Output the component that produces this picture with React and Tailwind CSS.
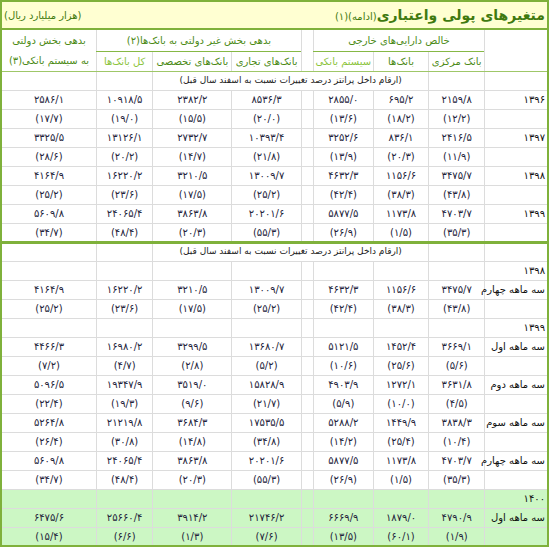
import React from 'react'

const widths = ['w-[63px]', 'w-[56px]', 'w-[55px]', 'w-[60px]', 'w-[12px]', 'w-[69px]', 'w-[79px]', 'w-[56px]', 'w-[95px]']

const NOTE = '(ارقام داخل پرانتز درصد تغییرات نسبت به اسفند سال قبل)'

const first = [
    { label: '۱۳۹۶', v: ['۲۱۵۹/۸', '۶۹۵/۲', '۲۸۵۵/۰', '۸۵۳۶/۳', '۲۳۸۲/۲', '۱۰۹۱۸/۵', '۲۵۸۶/۱'] },
    { label: '', v: ['(۱۲/۲)', '(۱۸/۲)', '(۱۳/۶)', '(۲۰/۰)', '(۱۵/۵)', '(۱۹/۰)', '(۱۷/۷)'] },
    { label: '۱۳۹۷', v: ['۲۴۱۶/۵', '۸۳۶/۱', '۳۲۵۲/۶', '۱۰۳۹۳/۴', '۲۷۳۲/۷', '۱۳۱۲۶/۱', '۳۳۲۵/۵'] },
    { label: '', v: ['(۱۱/۹)', '(۲۰/۳)', '(۱۳/۹)', '(۲۱/۸)', '(۱۴/۷)', '(۲۰/۲)', '(۲۸/۶)'] },
    { label: '۱۳۹۸', v: ['۳۴۷۵/۷', '۱۱۵۶/۶', '۴۶۳۲/۳', '۱۳۰۰۹/۷', '۳۲۱۰/۵', '۱۶۲۲۰/۲', '۴۱۶۴/۹'] },
    { label: '', v: ['(۴۳/۸)', '(۳۸/۳)', '(۴۲/۴)', '(۲۵/۲)', '(۱۷/۵)', '(۲۳/۶)', '(۲۵/۲)'] },
    { label: '۱۳۹۹', v: ['۴۷۰۳/۷', '۱۱۷۳/۸', '۵۸۷۷/۵', '۲۰۲۰۱/۶', '۳۸۶۳/۸', '۲۴۰۶۵/۴', '۵۶۰۹/۸'] },
    { label: '', v: ['(۳۵/۳)', '(۱/۵)', '(۲۶/۹)', '(۵۵/۳)', '(۲۰/۳)', '(۴۸/۴)', '(۳۴/۷)'] },
]

const second = [
    { label: '۱۳۹۸' },
    { label: 'سه ماهه چهارم', v: ['۳۴۷۵/۷', '۱۱۵۶/۶', '۴۶۳۲/۳', '۱۳۰۰۹/۷', '۳۲۱۰/۵', '۱۶۲۲۰/۲', '۴۱۶۴/۹'] },
    { label: '', v: ['(۴۳/۸)', '(۳۸/۳)', '(۴۲/۴)', '(۲۵/۲)', '(۱۷/۵)', '(۲۳/۶)', '(۲۵/۲)'] },
    { label: '۱۳۹۹' },
    { label: 'سه ماهه اول', v: ['۳۶۶۹/۱', '۱۴۵۲/۴', '۵۱۲۱/۵', '۱۳۶۸۰/۷', '۳۲۹۹/۵', '۱۶۹۸۰/۲', '۴۴۶۶/۳'] },
    { label: '', v: ['(۵/۶)', '(۲۵/۶)', '(۱۰/۶)', '(۵/۲)', '(۲/۸)', '(۴/۷)', '(۷/۲)'] },
    { label: 'سه ماهه دوم', v: ['۳۶۳۱/۸', '۱۲۷۲/۱', '۴۹۰۳/۹', '۱۵۸۲۸/۹', '۳۵۱۹/۰', '۱۹۳۴۷/۹', '۵۰۹۶/۵'] },
    { label: '', v: ['(۴/۵)', '(۱۰/۰)', '(۵/۹)', '(۲۱/۷)', '(۹/۶)', '(۱۹/۳)', '(۲۲/۴)'] },
    { label: 'سه ماهه سوم', v: ['۳۸۳۸/۳', '۱۴۴۹/۹', '۵۲۸۸/۲', '۱۷۵۳۵/۵', '۳۶۸۴/۳', '۲۱۲۱۹/۸', '۵۲۶۴/۸'] },
    { label: '', v: ['(۱۰/۴)', '(۲۵/۴)', '(۱۴/۲)', '(۳۴/۸)', '(۱۴/۸)', '(۳۰/۸)', '(۲۶/۴)'] },
    { label: 'سه ماهه چهارم', v: ['۴۷۰۳/۷', '۱۱۷۳/۸', '۵۸۷۷/۵', '۲۰۲۰۱/۶', '۳۸۶۳/۸', '۲۴۰۶۵/۴', '۵۶۰۹/۸'] },
    { label: '', v: ['(۳۵/۳)', '(۱/۵)', '(۲۶/۹)', '(۵۵/۳)', '(۲۰/۳)', '(۴۸/۴)', '(۳۴/۷)'] },
    { label: '۱۴۰۰', hl: true },
    { label: 'سه ماهه اول', hl: true, v: ['۴۷۹۰/۹', '۱۸۷۹/۰', '۶۶۶۹/۹', '۲۱۷۴۶/۲', '۳۹۱۴/۲', '۲۵۶۶۰/۴', '۶۴۷۵/۶'] },
    { label: '', hl: true, v: ['(۱/۹)', '(۶۰/۱)', '(۱۳/۵)', '(۷/۶)', '(۱/۳)', '(۶/۶)', '(۱۵/۴)'] },
]

const cell = 'border border-[#dcdcdc] p-0 text-center align-middle'

function NoteRow({ top }) {
    const b = top ? 'border-t-[3px] border-t-[#7fb13b]' : ''
    return (
        <tr className="h-[19px] text-[9px] text-[#222]">
            <td className={`${cell} ${b}`}></td>
            <td className={`${cell} ${b}`}></td>
            <td colSpan={5} className={`${cell} ${b}`}>{NOTE}</td>
            <td className={`${cell} ${b}`}></td>
            <td className={`${cell} ${b}`}></td>
        </tr>
    )
}

function DataRow({ row }) {
    const cells = row.v ? [row.v[0], row.v[1], row.v[2], '', row.v[3], row.v[4], row.v[5], row.v[6]] : Array(8).fill('')
    return (
        <tr className={`h-[19px] text-[10px] text-[#23233a] ${row.hl ? 'bg-[#ccf7c4]' : ''}`}>
            <td className={`${cell} whitespace-nowrap !text-right pr-[2px] text-[10px] text-[#111]`}>{row.label}</td>
            {cells.map((c, i) => (
                <td key={i} className={cell}>{c}</td>
            ))}
        </tr>
    )
}

export default function App() {
    return (
        <div dir="rtl" className="w-[549px] bg-white font-['DejaVu_Sans',sans-serif]">
            <table className="w-[549px] table-fixed border-collapse border-2 border-[#7fb13b]">
                <colgroup>
                    {widths.map((w, i) => (
                        <col key={i} className={w} />
                    ))}
                </colgroup>
                <tbody>
                    {/* title */}
                    <tr className="h-[28px] bg-[#ffffd2]">
                        <td colSpan={9} className="border-b-2 border-[#7fb13b] px-[2px]">
                            <div className="flex items-center justify-between">
                                <span className="whitespace-nowrap text-[#3f7a10]">
                                    <span className="text-[14px] font-bold">متغیرهای پولی واعتباری</span>
                                    <span className="text-[10px]">(ادامه)(۱)</span>
                                </span>
                                <span className="text-[10px] text-[#3f7a10]">(هزار میلیارد ریال)</span>
                            </div>
                        </td>
                    </tr>

                    {/* header */}
                    <tr className="h-[22px] text-[10px] text-[#4c8a16]">
                        <td rowSpan={2} className={`${cell} border-b-[#9fc768]`}></td>
                        <td colSpan={3} className={`${cell} border-b-[#86b845]`}>خالص دارایی‌های خارجی</td>
                        <td rowSpan={2} className={`${cell} border-b-[#9fc768]`}></td>
                        <td colSpan={3} className={`${cell} border-b-[#86b845]`}>بدهی بخش غیر دولتی به بانک‌ها(۲)</td>
                        <td className={`${cell} border-b-0`}>بدهی بخش دولتی</td>
                    </tr>
                    <tr className="h-[20px] text-[10px] text-[#4c8a16]">
                        <td className={`${cell} border-b-[#9fc768]`}>بانک مرکزی</td>
                        <td className={`${cell} border-b-[#9fc768]`}>بانک‌ها</td>
                        <td className={`${cell} border-b-[#9fc768] text-[#8cc43c]`}>سیستم بانکی</td>
                        <td className={`${cell} border-b-[#9fc768] whitespace-nowrap`}>بانک‌های تجاری</td>
                        <td className={`${cell} border-b-[#9fc768] whitespace-nowrap`}>بانک‌های تخصصی</td>
                        <td className={`${cell} border-b-[#9fc768] text-[#8cc43c]`}>کل بانک‌ها</td>
                        <td className={`${cell} border-t-0 border-b-[#9fc768]`}>به سیستم بانکی(۳)</td>
                    </tr>

                    <NoteRow />
                    {first.map((r, i) => (
                        <DataRow key={i} row={r} />
                    ))}

                    <NoteRow top />
                    {second.map((r, i) => (
                        <DataRow key={i} row={r} />
                    ))}
                </tbody>
            </table>
        </div>
    )
}
